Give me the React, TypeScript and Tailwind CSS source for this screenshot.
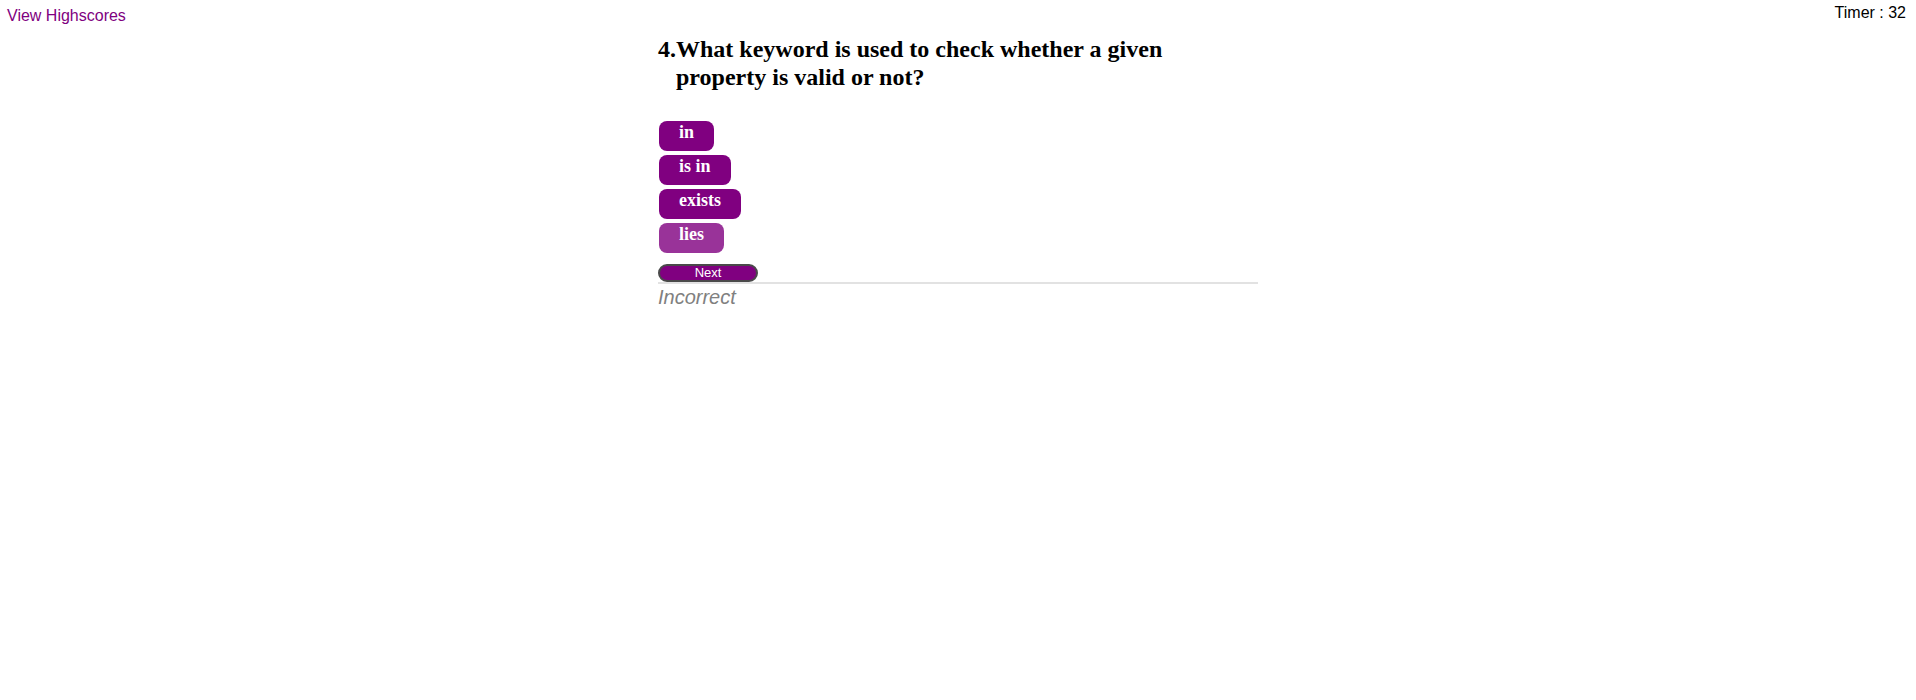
import React from "react";

export default function App() {
  const options = [
    { label: "in", light: false },
    { label: "is in", light: false },
    { label: "exists", light: false },
    { label: "lies", light: true },
  ];
  return (
    <div className="min-h-[700px] w-full bg-white" style={{ fontFamily: '"Liberation Sans", Arial, sans-serif' }}>
      <header className="flex h-[30px] items-start justify-between">
        <a className="pl-[7px] pt-[7px] text-[16px] leading-[18px] text-[#800080]">View Highscores</a>
        <div className="pr-[10px] pt-[4px] text-[16px] leading-[18px] text-black">Timer : 32</div>
      </header>
      <main className="mx-auto w-[600px]">
        <h2
          className="mt-[5px] flex text-[24px] font-bold leading-[28px] text-black"
          style={{ fontFamily: '"Liberation Serif", "Times New Roman", serif' }}
        >
          <span>4.</span>
          <span className="w-[500px]">What keyword is used to check whether a given property is valid or not?</span>
        </h2>
        <div className="mt-[30px] flex flex-col items-start gap-[4px]">
          {options.map((o) => (
            <button
              key={o.label}
              className={
                "ml-px h-[30px] rounded-lg px-[20px] pt-px text-left align-top text-[18px] font-bold leading-[21px] text-white " +
                (o.light ? "bg-[#993399]" : "bg-[#800080]")
              }
              style={{ fontFamily: '"Liberation Serif", "Times New Roman", serif', paddingBottom: 8 }}
            >
              {o.label}
            </button>
          ))}
        </div>
        <button className="mt-[11px] flex h-[18px] w-[100px] items-center justify-center rounded-full border-2 border-[#4a4a4a] bg-[#800080] pb-px text-[13px] leading-none text-white">
          Next
        </button>
        <div className="h-[2px] w-full bg-[#e2e2e2]" />
        <p className="mt-[2px] text-[20px] italic leading-[23px] text-[#808080]">Incorrect</p>
      </main>
    </div>
  );
}
